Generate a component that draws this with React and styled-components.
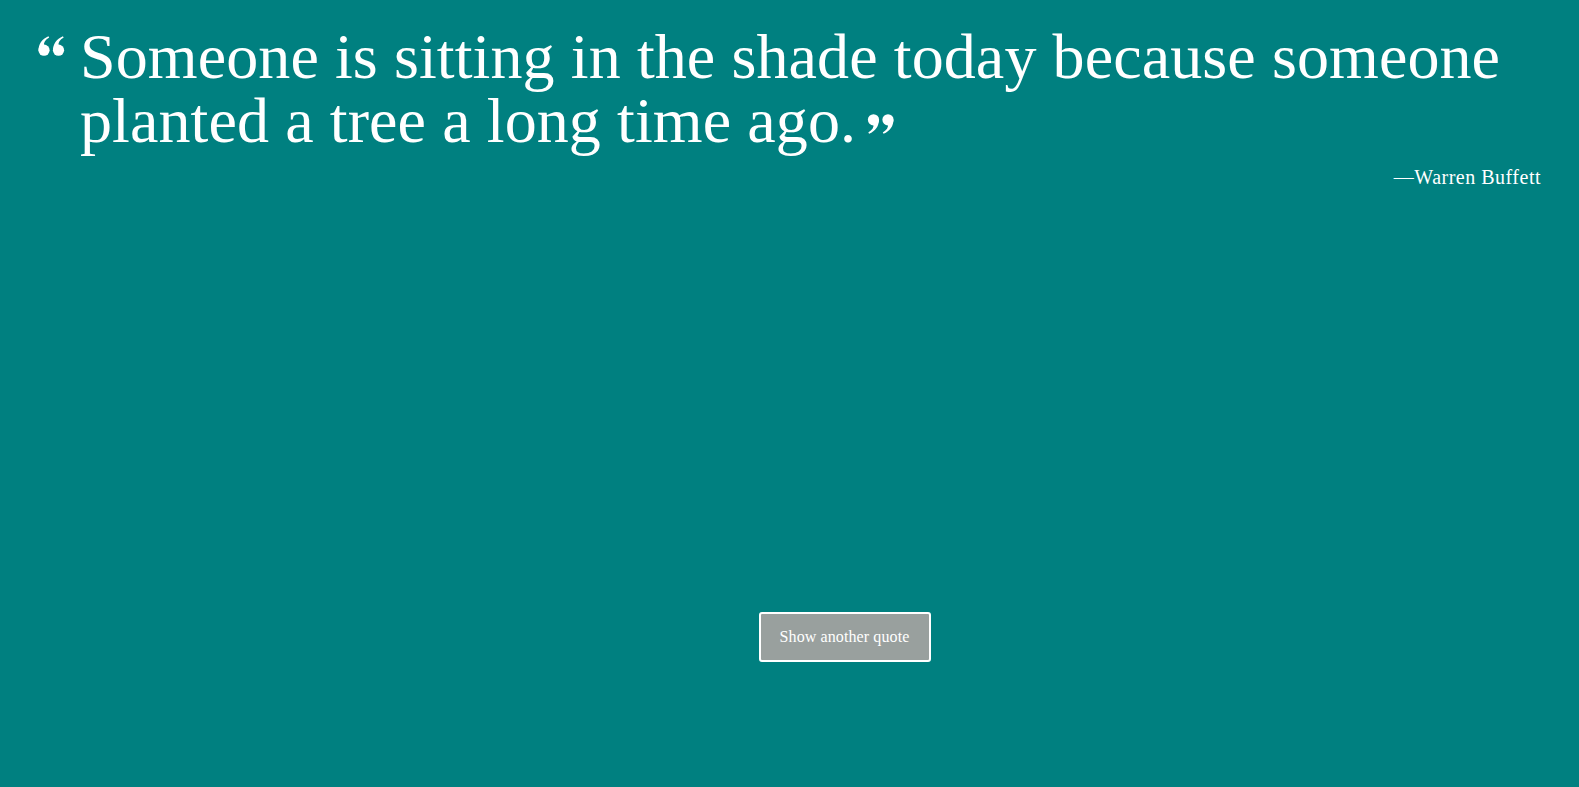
import React from 'react';
import styled, { createGlobalStyle } from 'styled-components';

const GlobalStyle = createGlobalStyle`
  html, body {
    margin: 0;
    padding: 0;
    background-color: #008080;
  }
  body {
    font-family: "Liberation Serif", "DejaVu Serif", serif;
    color: #fff;
  }
`

const Page = styled.div`
  min-height: 787px;
  display: flex;
  flex-direction: column;
  padding: 0 38px;
  box-sizing: border-box;
`

const QuoteBox = styled.blockquote`
  margin: 0;
  padding-top: 25px;
  display: flex;
  align-items: flex-start;
`

const Mark = styled.svg`
  flex-shrink: 0;
  width: 27px;
  height: 20px;
  fill: #fff;
  margin-top: ${(p) => p.top || 0}px;
  margin-right: ${(p) => p.gap || 0}px;
  margin-left: ${(p) => p.lead || 0}px;
  vertical-align: ${(p) => p.shift || 0}px;
`

const QuoteText = styled.p`
  margin: 0;
  font-size: 64px;
  line-height: 64px;
  font-weight: 400;
  letter-spacing: 0.1px;
`

const Author = styled.p`
  margin: 12px 0 0;
  text-align: right;
  font-size: 20px;
  line-height: 24px;
  letter-spacing: 0.5px;
`

const Footer = styled.div`
  display: flex;
  justify-content: center;
  margin-top: 423px;
  padding-left: 110px;
`

const Button = styled.button`
  width: 172px;
  height: 50px;
  background-color: #99a09e;
  color: #fff;
  border: 2px solid #fff;
  border-radius: 3px;
  font-family: "Liberation Serif", "DejaVu Serif", serif;
  font-size: 16px;
  letter-spacing: 0.1px;
  cursor: pointer;
`

function QuoteMark({ flip, ...rest }) {
  return (
    <Mark viewBox="0 0 27 20" {...rest}>
      <g transform={flip ? 'rotate(180 13.5 10)' : undefined}>
        <circle cx="6" cy="14.2" r="5.6" />
        <path d="M0.6 14.5 C0.4 8 4 3 10.4 0.2 L11.2 1.6 C7.2 4 5.6 6.6 6 9.5 Z" />
        <circle cx="20.5" cy="14.2" r="5.6" />
        <path d="M15.1 14.5 C14.9 8 18.5 3 24.9 0.2 L25.7 1.6 C21.7 4 20.1 6.6 20.5 9.5 Z" />
      </g>
    </Mark>
  )
}

export default function App() {
  return (
    <>
      <GlobalStyle />
      <Page>
        <QuoteBox>
          <QuoteMark top={11} gap={15} />
          <QuoteText>
            Someone is sitting in the shade today because someone planted a tree a long time ago.
            <QuoteMark flip lead={11} shift={8} />
          </QuoteText>
        </QuoteBox>
        <Author>—Warren Buffett</Author>
        <Footer>
          <Button>Show another quote</Button>
        </Footer>
      </Page>
    </>
  );
}
